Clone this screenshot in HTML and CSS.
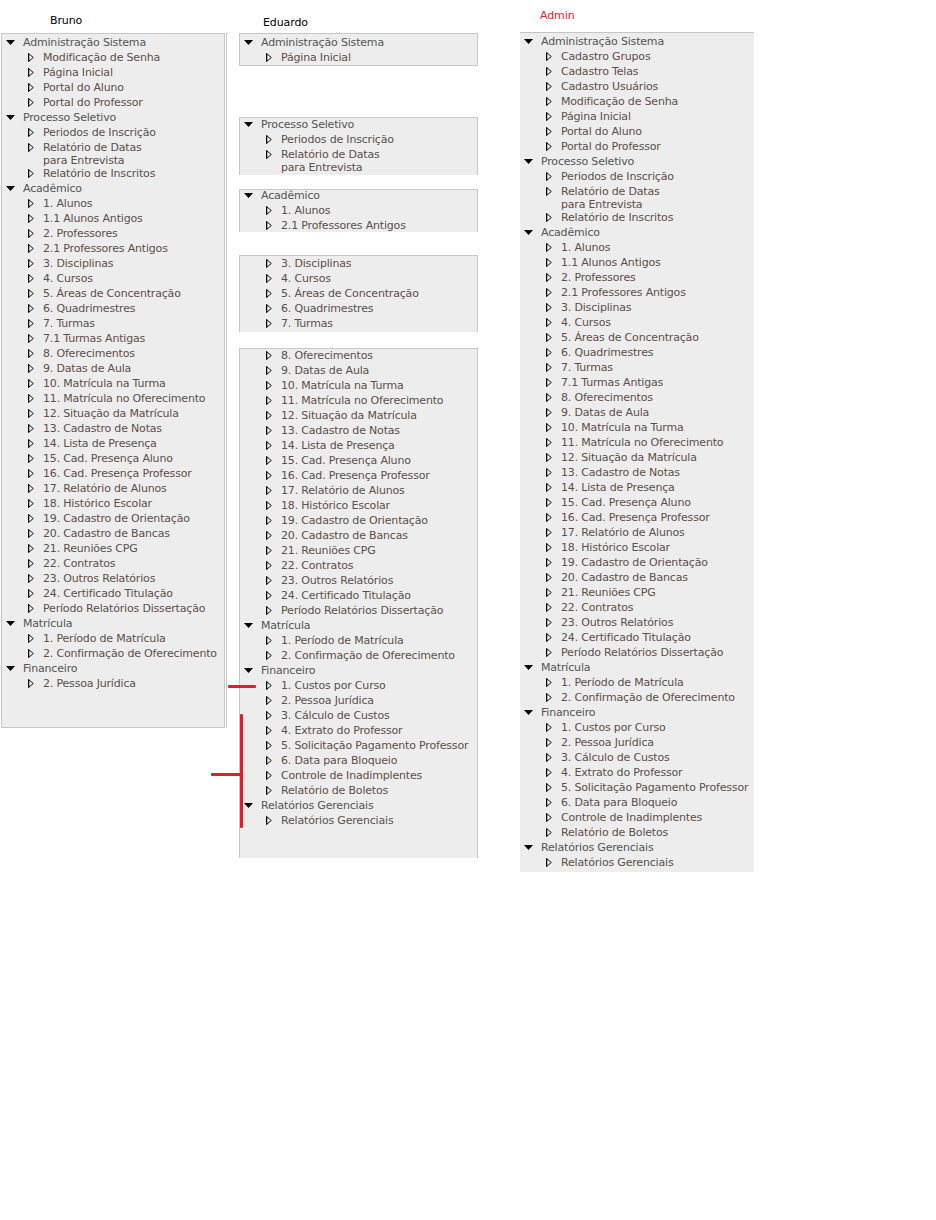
FILE: index.html
```html
<!DOCTYPE html>
<html lang="pt-BR">
<head>
<meta charset="utf-8">
<title>Menus por usuário</title>
<link rel="stylesheet" href="styles.css">
</head>
<body>
<svg class="defs" width="0" height="0" aria-hidden="true">
  <defs>
    <symbol id="down" viewBox="0 0 9 5"><path d="M0 0H9L4.5 5Z" fill="#000"/></symbol>
    <symbol id="right" viewBox="0 0 6 9"><path d="M0.6 0.6L5.3 4.5L0.6 8.4Z" fill="#f4f4f4" stroke="#111" stroke-width="1"/><path d="M0.6 0.4V8.6" stroke="#000" stroke-width="1.2"/></symbol>
  </defs>
</svg>
<div class="page">

  <!-- Bruno -->
  <div class="col col-bruno">
    <div class="label label-bruno">Bruno</div>
    <div class="box box-bruno">
      <ul class="menu">
        <li class="row hdr"><svg class="ic-d"><use href="#down"/></svg><span>Administração Sistema</span></li>
        <li class="row item"><svg class="ic-r"><use href="#right"/></svg><span>Modificação de Senha</span></li>
        <li class="row item"><svg class="ic-r"><use href="#right"/></svg><span>Página Inicial</span></li>
        <li class="row item"><svg class="ic-r"><use href="#right"/></svg><span>Portal do Aluno</span></li>
        <li class="row item"><svg class="ic-r"><use href="#right"/></svg><span>Portal do Professor</span></li>
        <li class="row hdr"><svg class="ic-d"><use href="#down"/></svg><span>Processo Seletivo</span></li>
        <li class="row item"><svg class="ic-r"><use href="#right"/></svg><span>Periodos de Inscrição</span></li>
        <li class="row item wrap"><svg class="ic-r"><use href="#right"/></svg><span>Relatório de Datas<br>para Entrevista</span></li>
        <li class="row item"><svg class="ic-r"><use href="#right"/></svg><span>Relatório de Inscritos</span></li>
        <li class="row hdr"><svg class="ic-d"><use href="#down"/></svg><span>Acadêmico</span></li>
        <li class="row item"><svg class="ic-r"><use href="#right"/></svg><span>1. Alunos</span></li>
        <li class="row item"><svg class="ic-r"><use href="#right"/></svg><span>1.1 Alunos Antigos</span></li>
        <li class="row item"><svg class="ic-r"><use href="#right"/></svg><span>2. Professores</span></li>
        <li class="row item"><svg class="ic-r"><use href="#right"/></svg><span>2.1 Professores Antigos</span></li>
        <li class="row item"><svg class="ic-r"><use href="#right"/></svg><span>3. Disciplinas</span></li>
        <li class="row item"><svg class="ic-r"><use href="#right"/></svg><span>4. Cursos</span></li>
        <li class="row item"><svg class="ic-r"><use href="#right"/></svg><span>5. Áreas de Concentração</span></li>
        <li class="row item"><svg class="ic-r"><use href="#right"/></svg><span>6. Quadrimestres</span></li>
        <li class="row item"><svg class="ic-r"><use href="#right"/></svg><span>7. Turmas</span></li>
        <li class="row item"><svg class="ic-r"><use href="#right"/></svg><span>7.1 Turmas Antigas</span></li>
        <li class="row item"><svg class="ic-r"><use href="#right"/></svg><span>8. Oferecimentos</span></li>
        <li class="row item"><svg class="ic-r"><use href="#right"/></svg><span>9. Datas de Aula</span></li>
        <li class="row item"><svg class="ic-r"><use href="#right"/></svg><span>10. Matrícula na Turma</span></li>
        <li class="row item"><svg class="ic-r"><use href="#right"/></svg><span>11. Matrícula no Oferecimento</span></li>
        <li class="row item"><svg class="ic-r"><use href="#right"/></svg><span>12. Situação da Matrícula</span></li>
        <li class="row item"><svg class="ic-r"><use href="#right"/></svg><span>13. Cadastro de Notas</span></li>
        <li class="row item"><svg class="ic-r"><use href="#right"/></svg><span>14. Lista de Presença</span></li>
        <li class="row item"><svg class="ic-r"><use href="#right"/></svg><span>15. Cad. Presença Aluno</span></li>
        <li class="row item"><svg class="ic-r"><use href="#right"/></svg><span>16. Cad. Presença Professor</span></li>
        <li class="row item"><svg class="ic-r"><use href="#right"/></svg><span>17. Relatório de Alunos</span></li>
        <li class="row item"><svg class="ic-r"><use href="#right"/></svg><span>18. Histórico Escolar</span></li>
        <li class="row item"><svg class="ic-r"><use href="#right"/></svg><span>19. Cadastro de Orientação</span></li>
        <li class="row item"><svg class="ic-r"><use href="#right"/></svg><span>20. Cadastro de Bancas</span></li>
        <li class="row item"><svg class="ic-r"><use href="#right"/></svg><span>21. Reuniões CPG</span></li>
        <li class="row item"><svg class="ic-r"><use href="#right"/></svg><span>22. Contratos</span></li>
        <li class="row item"><svg class="ic-r"><use href="#right"/></svg><span>23. Outros Relatórios</span></li>
        <li class="row item"><svg class="ic-r"><use href="#right"/></svg><span>24. Certificado Titulação</span></li>
        <li class="row item"><svg class="ic-r"><use href="#right"/></svg><span>Período Relatórios Dissertação</span></li>
        <li class="row hdr"><svg class="ic-d"><use href="#down"/></svg><span>Matrícula</span></li>
        <li class="row item"><svg class="ic-r"><use href="#right"/></svg><span>1. Período de Matrícula</span></li>
        <li class="row item"><svg class="ic-r"><use href="#right"/></svg><span>2. Confirmação de Oferecimento</span></li>
        <li class="row hdr"><svg class="ic-d"><use href="#down"/></svg><span>Financeiro</span></li>
        <li class="row item"><svg class="ic-r"><use href="#right"/></svg><span>2. Pessoa Jurídica</span></li>
      </ul>
    </div>
  </div>

  <div class="sep-line"></div>

  <!-- Eduardo -->
  <div class="col col-eduardo">
    <div class="label label-eduardo">Eduardo</div>
    <div class="box seg seg-a">
      <ul class="menu">
        <li class="row hdr"><svg class="ic-d"><use href="#down"/></svg><span>Administração Sistema</span></li>
        <li class="row item"><svg class="ic-r"><use href="#right"/></svg><span>Página Inicial</span></li>
      </ul>
    </div>
    <div class="box seg seg-b">
      <ul class="menu">
        <li class="row hdr"><svg class="ic-d"><use href="#down"/></svg><span>Processo Seletivo</span></li>
        <li class="row item"><svg class="ic-r"><use href="#right"/></svg><span>Periodos de Inscrição</span></li>
        <li class="row item wrap"><svg class="ic-r"><use href="#right"/></svg><span>Relatório de Datas<br>para Entrevista</span></li>
      </ul>
    </div>
    <div class="box seg seg-c">
      <ul class="menu">
        <li class="row hdr"><svg class="ic-d"><use href="#down"/></svg><span>Acadêmico</span></li>
        <li class="row item"><svg class="ic-r"><use href="#right"/></svg><span>1. Alunos</span></li>
        <li class="row item"><svg class="ic-r"><use href="#right"/></svg><span>2.1 Professores Antigos</span></li>
      </ul>
    </div>
    <div class="box seg seg-d">
      <ul class="menu">
        <li class="row item"><svg class="ic-r"><use href="#right"/></svg><span>3. Disciplinas</span></li>
        <li class="row item"><svg class="ic-r"><use href="#right"/></svg><span>4. Cursos</span></li>
        <li class="row item"><svg class="ic-r"><use href="#right"/></svg><span>5. Áreas de Concentração</span></li>
        <li class="row item"><svg class="ic-r"><use href="#right"/></svg><span>6. Quadrimestres</span></li>
        <li class="row item"><svg class="ic-r"><use href="#right"/></svg><span>7. Turmas</span></li>
      </ul>
    </div>
    <div class="box seg seg-e">
      <ul class="menu">
        <li class="row item"><svg class="ic-r"><use href="#right"/></svg><span>8. Oferecimentos</span></li>
        <li class="row item"><svg class="ic-r"><use href="#right"/></svg><span>9. Datas de Aula</span></li>
        <li class="row item"><svg class="ic-r"><use href="#right"/></svg><span>10. Matrícula na Turma</span></li>
        <li class="row item"><svg class="ic-r"><use href="#right"/></svg><span>11. Matrícula no Oferecimento</span></li>
        <li class="row item"><svg class="ic-r"><use href="#right"/></svg><span>12. Situação da Matrícula</span></li>
        <li class="row item"><svg class="ic-r"><use href="#right"/></svg><span>13. Cadastro de Notas</span></li>
        <li class="row item"><svg class="ic-r"><use href="#right"/></svg><span>14. Lista de Presença</span></li>
        <li class="row item"><svg class="ic-r"><use href="#right"/></svg><span>15. Cad. Presença Aluno</span></li>
        <li class="row item"><svg class="ic-r"><use href="#right"/></svg><span>16. Cad. Presença Professor</span></li>
        <li class="row item"><svg class="ic-r"><use href="#right"/></svg><span>17. Relatório de Alunos</span></li>
        <li class="row item"><svg class="ic-r"><use href="#right"/></svg><span>18. Histórico Escolar</span></li>
        <li class="row item"><svg class="ic-r"><use href="#right"/></svg><span>19. Cadastro de Orientação</span></li>
        <li class="row item"><svg class="ic-r"><use href="#right"/></svg><span>20. Cadastro de Bancas</span></li>
        <li class="row item"><svg class="ic-r"><use href="#right"/></svg><span>21. Reuniões CPG</span></li>
        <li class="row item"><svg class="ic-r"><use href="#right"/></svg><span>22. Contratos</span></li>
        <li class="row item"><svg class="ic-r"><use href="#right"/></svg><span>23. Outros Relatórios</span></li>
        <li class="row item"><svg class="ic-r"><use href="#right"/></svg><span>24. Certificado Titulação</span></li>
        <li class="row item"><svg class="ic-r"><use href="#right"/></svg><span>Período Relatórios Dissertação</span></li>
        <li class="row hdr"><svg class="ic-d"><use href="#down"/></svg><span>Matrícula</span></li>
        <li class="row item"><svg class="ic-r"><use href="#right"/></svg><span>1. Período de Matrícula</span></li>
        <li class="row item"><svg class="ic-r"><use href="#right"/></svg><span>2. Confirmação de Oferecimento</span></li>
        <li class="row hdr"><svg class="ic-d"><use href="#down"/></svg><span>Financeiro</span></li>
        <li class="row item"><svg class="ic-r"><use href="#right"/></svg><span>1. Custos por Curso</span></li>
        <li class="row item"><svg class="ic-r"><use href="#right"/></svg><span>2. Pessoa Jurídica</span></li>
        <li class="row item"><svg class="ic-r"><use href="#right"/></svg><span>3. Cálculo de Custos</span></li>
        <li class="row item"><svg class="ic-r"><use href="#right"/></svg><span>4. Extrato do Professor</span></li>
        <li class="row item"><svg class="ic-r"><use href="#right"/></svg><span>5. Solicitação Pagamento Professor</span></li>
        <li class="row item"><svg class="ic-r"><use href="#right"/></svg><span>6. Data para Bloqueio</span></li>
        <li class="row item"><svg class="ic-r"><use href="#right"/></svg><span>Controle de Inadimplentes</span></li>
        <li class="row item"><svg class="ic-r"><use href="#right"/></svg><span>Relatório de Boletos</span></li>
        <li class="row hdr"><svg class="ic-d"><use href="#down"/></svg><span>Relatórios Gerenciais</span></li>
        <li class="row item"><svg class="ic-r"><use href="#right"/></svg><span>Relatórios Gerenciais</span></li>
      </ul>
    </div>
  </div>

  <!-- Admin -->
  <div class="col col-admin">
    <div class="label label-admin">Admin</div>
    <div class="box box-admin">
      <ul class="menu">
        <li class="row hdr"><svg class="ic-d"><use href="#down"/></svg><span>Administração Sistema</span></li>
        <li class="row item"><svg class="ic-r"><use href="#right"/></svg><span>Cadastro Grupos</span></li>
        <li class="row item"><svg class="ic-r"><use href="#right"/></svg><span>Cadastro Telas</span></li>
        <li class="row item"><svg class="ic-r"><use href="#right"/></svg><span>Cadastro Usuários</span></li>
        <li class="row item"><svg class="ic-r"><use href="#right"/></svg><span>Modificação de Senha</span></li>
        <li class="row item"><svg class="ic-r"><use href="#right"/></svg><span>Página Inicial</span></li>
        <li class="row item"><svg class="ic-r"><use href="#right"/></svg><span>Portal do Aluno</span></li>
        <li class="row item"><svg class="ic-r"><use href="#right"/></svg><span>Portal do Professor</span></li>
        <li class="row hdr"><svg class="ic-d"><use href="#down"/></svg><span>Processo Seletivo</span></li>
        <li class="row item"><svg class="ic-r"><use href="#right"/></svg><span>Periodos de Inscrição</span></li>
        <li class="row item wrap"><svg class="ic-r"><use href="#right"/></svg><span>Relatório de Datas<br>para Entrevista</span></li>
        <li class="row item"><svg class="ic-r"><use href="#right"/></svg><span>Relatório de Inscritos</span></li>
        <li class="row hdr"><svg class="ic-d"><use href="#down"/></svg><span>Acadêmico</span></li>
        <li class="row item"><svg class="ic-r"><use href="#right"/></svg><span>1. Alunos</span></li>
        <li class="row item"><svg class="ic-r"><use href="#right"/></svg><span>1.1 Alunos Antigos</span></li>
        <li class="row item"><svg class="ic-r"><use href="#right"/></svg><span>2. Professores</span></li>
        <li class="row item"><svg class="ic-r"><use href="#right"/></svg><span>2.1 Professores Antigos</span></li>
        <li class="row item"><svg class="ic-r"><use href="#right"/></svg><span>3. Disciplinas</span></li>
        <li class="row item"><svg class="ic-r"><use href="#right"/></svg><span>4. Cursos</span></li>
        <li class="row item"><svg class="ic-r"><use href="#right"/></svg><span>5. Áreas de Concentração</span></li>
        <li class="row item"><svg class="ic-r"><use href="#right"/></svg><span>6. Quadrimestres</span></li>
        <li class="row item"><svg class="ic-r"><use href="#right"/></svg><span>7. Turmas</span></li>
        <li class="row item"><svg class="ic-r"><use href="#right"/></svg><span>7.1 Turmas Antigas</span></li>
        <li class="row item"><svg class="ic-r"><use href="#right"/></svg><span>8. Oferecimentos</span></li>
        <li class="row item"><svg class="ic-r"><use href="#right"/></svg><span>9. Datas de Aula</span></li>
        <li class="row item"><svg class="ic-r"><use href="#right"/></svg><span>10. Matrícula na Turma</span></li>
        <li class="row item"><svg class="ic-r"><use href="#right"/></svg><span>11. Matrícula no Oferecimento</span></li>
        <li class="row item"><svg class="ic-r"><use href="#right"/></svg><span>12. Situação da Matrícula</span></li>
        <li class="row item"><svg class="ic-r"><use href="#right"/></svg><span>13. Cadastro de Notas</span></li>
        <li class="row item"><svg class="ic-r"><use href="#right"/></svg><span>14. Lista de Presença</span></li>
        <li class="row item"><svg class="ic-r"><use href="#right"/></svg><span>15. Cad. Presença Aluno</span></li>
        <li class="row item"><svg class="ic-r"><use href="#right"/></svg><span>16. Cad. Presença Professor</span></li>
        <li class="row item"><svg class="ic-r"><use href="#right"/></svg><span>17. Relatório de Alunos</span></li>
        <li class="row item"><svg class="ic-r"><use href="#right"/></svg><span>18. Histórico Escolar</span></li>
        <li class="row item"><svg class="ic-r"><use href="#right"/></svg><span>19. Cadastro de Orientação</span></li>
        <li class="row item"><svg class="ic-r"><use href="#right"/></svg><span>20. Cadastro de Bancas</span></li>
        <li class="row item"><svg class="ic-r"><use href="#right"/></svg><span>21. Reuniões CPG</span></li>
        <li class="row item"><svg class="ic-r"><use href="#right"/></svg><span>22. Contratos</span></li>
        <li class="row item"><svg class="ic-r"><use href="#right"/></svg><span>23. Outros Relatórios</span></li>
        <li class="row item"><svg class="ic-r"><use href="#right"/></svg><span>24. Certificado Titulação</span></li>
        <li class="row item"><svg class="ic-r"><use href="#right"/></svg><span>Período Relatórios Dissertação</span></li>
        <li class="row hdr"><svg class="ic-d"><use href="#down"/></svg><span>Matrícula</span></li>
        <li class="row item"><svg class="ic-r"><use href="#right"/></svg><span>1. Período de Matrícula</span></li>
        <li class="row item"><svg class="ic-r"><use href="#right"/></svg><span>2. Confirmação de Oferecimento</span></li>
        <li class="row hdr"><svg class="ic-d"><use href="#down"/></svg><span>Financeiro</span></li>
        <li class="row item"><svg class="ic-r"><use href="#right"/></svg><span>1. Custos por Curso</span></li>
        <li class="row item"><svg class="ic-r"><use href="#right"/></svg><span>2. Pessoa Jurídica</span></li>
        <li class="row item"><svg class="ic-r"><use href="#right"/></svg><span>3. Cálculo de Custos</span></li>
        <li class="row item"><svg class="ic-r"><use href="#right"/></svg><span>4. Extrato do Professor</span></li>
        <li class="row item"><svg class="ic-r"><use href="#right"/></svg><span>5. Solicitação Pagamento Professor</span></li>
        <li class="row item"><svg class="ic-r"><use href="#right"/></svg><span>6. Data para Bloqueio</span></li>
        <li class="row item"><svg class="ic-r"><use href="#right"/></svg><span>Controle de Inadimplentes</span></li>
        <li class="row item"><svg class="ic-r"><use href="#right"/></svg><span>Relatório de Boletos</span></li>
        <li class="row hdr"><svg class="ic-d"><use href="#down"/></svg><span>Relatórios Gerenciais</span></li>
        <li class="row item"><svg class="ic-r"><use href="#right"/></svg><span>Relatórios Gerenciais</span></li>
      </ul>
    </div>
  </div>
</div>

<!-- red annotation marks -->
<div class="mark mark-h1"></div>
<div class="mark mark-v"></div>
<div class="mark mark-h2"></div>
</body>
</html>
```

FILE: styles.css
```css
html, body {
  margin: 0;
  padding: 0;
  background: #fff;
}
body {
  position: relative;
  width: 936px;
  height: 1220px;
  font-family: "DejaVu Sans", "Liberation Sans", sans-serif;
  font-size: 11px;
  color: #000;
  overflow: hidden;
}
.defs {
  position: absolute;
  width: 0;
  height: 0;
}
.page {
  display: flex;
  align-items: flex-start;
}
.col {
  display: flex;
  flex-direction: column;
  flex: none;
}
.label {
  box-sizing: border-box;
  line-height: 13px;
  white-space: nowrap;
  letter-spacing: -0.1px;
}
.col-bruno {
  margin-left: 1px;
  width: 224px;
}
.label-bruno {
  height: 33px;
  padding: 14px 0 0 49px;
}
.sep-line {
  flex: none;
  margin: 33px 0 0 1px;
  width: 2px;
  height: 695px;
  border-left: 1px solid #c8c8c8;
  border-top: 1px solid #c8c8c8;
  box-sizing: border-box;
}
.col-eduardo {
  margin-left: 11px;
  width: 239px;
}
.label-eduardo {
  height: 33px;
  padding: 16px 0 0 24px;
}
.col-admin {
  margin-left: 42px;
  width: 234px;
}
.label-admin {
  height: 32px;
  padding: 9px 0 0 20px;
  color: #f0142d;
}

.box {
  box-sizing: border-box;
  background: #ededed;
  border: 1px solid #c8c8c8;
  overflow: hidden;
}
.box-bruno {
  height: 695px;
  padding-top: 1px;
}
.box-admin {
  height: 840px;
  border: 0;
  border-top: 1px solid #c4c4c4;
  padding: 1px 0 0 0;
}
.seg {
  border-bottom: 0;
}
.seg-a { height: 33px; padding-top: 1px; border-bottom: 1px solid #c8c8c8; }
.seg-b { margin-top: 51px; height: 58px; }
.seg-b .menu { margin-top: -1px; }
.seg-c { margin-top: 14px; height: 43px; }
.seg-c .menu { margin-top: -2px; }
.seg-d { margin-top: 23px; height: 77px; }
.seg-e { margin-top: 16px; height: 510px; }
.seg-e .menu { margin-top: -1px; }

.menu {
  list-style: none;
  margin: 0;
  padding: 0;
}
.row {
  display: flex;
  align-items: flex-start;
  line-height: 13px;
  height: 15px;
  box-sizing: border-box;
  padding: 1px 0;
  white-space: nowrap;
  letter-spacing: -0.18px;
}
.row.wrap {
  height: 26px;
}
.hdr {
  color: #545454;
}
.item {
  color: #5e4f48;
}
.ic-d {
  flex: none;
  width: 9px;
  height: 5px;
  margin: 4px 8px 0 4px;
}
.ic-r {
  flex: none;
  width: 6px;
  height: 9px;
  margin: 2px 9px 0 26px;
}

.mark {
  position: absolute;
  background: #e51b2a;
  border-radius: 1px;
}
.mark-h1 { left: 228px; top: 685px; width: 28px; height: 3px; }
.mark-v  { left: 240px; top: 714px; width: 3px; height: 114px; }
.mark-h2 { left: 211px; top: 773px; width: 31px; height: 3px; }
```
